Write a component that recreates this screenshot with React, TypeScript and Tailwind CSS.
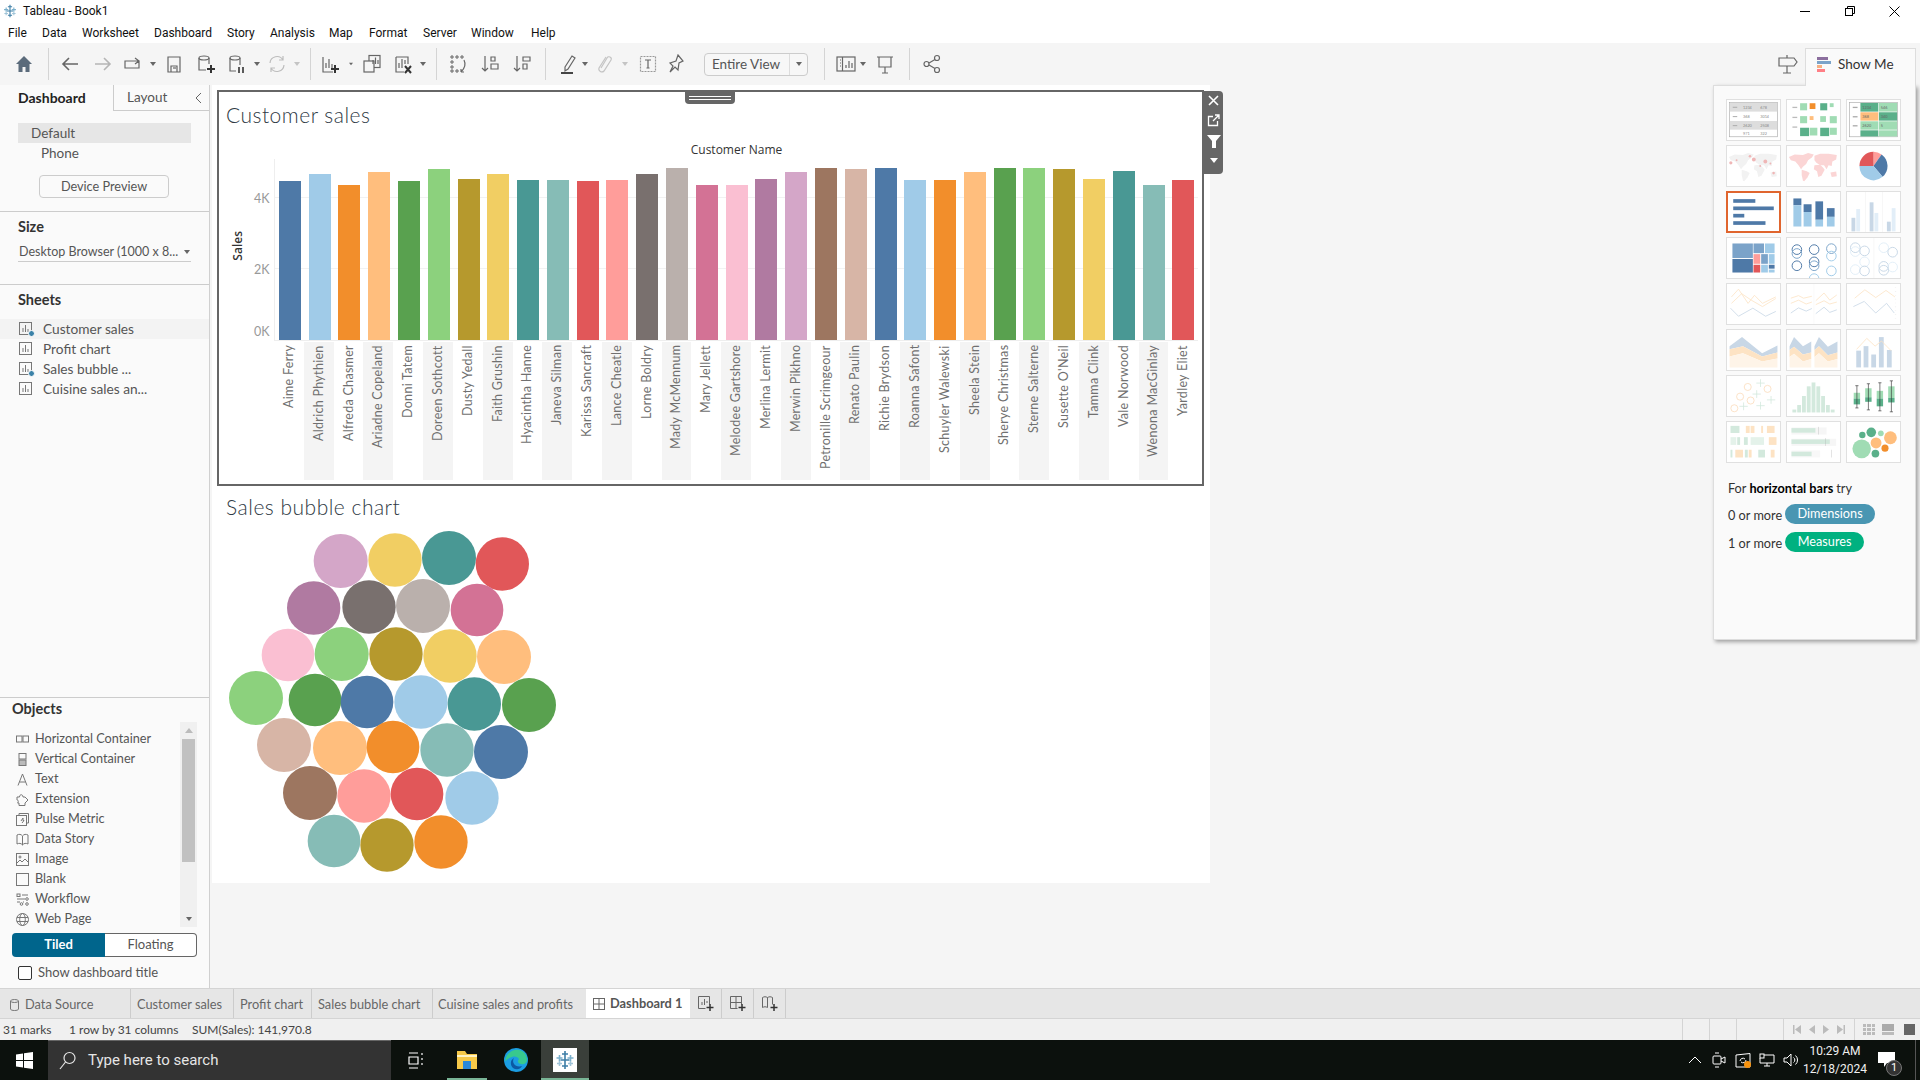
import type { ReactNode } from 'react';

const PALETTE = [
  '#4e79a7', '#a0cbe8', '#f28e2b', '#ffbe7d', '#59a14f', '#8cd17d', '#b6992d', '#f1ce63', '#499894', '#86bcb6',
  '#e15759', '#ff9d9a', '#79706e', '#bab0ac', '#d37295', '#fabfd2', '#b07aa1', '#d4a6c8', '#9d7660', '#d7b5a6',
];

const CUSTOMERS: [string, number][] = [
  ['Aime Ferry', 159], ['Aldrich Phythien', 166], ['Alfreda Chasmer', 155], ['Ariadne Copeland', 168],
  ['Donni Tatem', 159], ['Doreen Sothcott', 171], ['Dusty Yedall', 161], ['Faith Grushin', 166],
  ['Hyacintha Hanne', 160], ['Janeva Silman', 160], ['Karissa Sancraft', 159], ['Lance Cheatle', 160],
  ['Lorne Boldry', 166], ['Mady McMennum', 172], ['Mary Jellett', 155], ['Melodee Gartshore', 155],
  ['Merlina Lermit', 161], ['Merwin Pikhno', 168], ['Petronille Scrimgeour', 172], ['Renato Paulin', 171],
  ['Richie Brydson', 172], ['Roanna Safont', 160], ['Schuyler Walewski', 160], ['Sheela Stein', 168],
  ['Sherye Christmas', 172], ['Sterne Salterne', 172], ['Susette O\'Neil', 171], ['Tamma Clink', 161],
  ['Vale Norwood', 169], ['Wenona MacGinlay', 155], ['Yardley Eliet', 160],
];

const BUBBLES: [number, number, number, string][] = [
  [362, 213, 81, '#d4a6c8'], [525, 210, 80, '#f1ce63'], [687, 204, 81, '#499894'], [847, 222, 80, '#e15759'],
  [281, 354, 80, '#b07aa1'], [447, 351, 80, '#79706e'], [609, 348, 81, '#bab0ac'], [771, 360, 79, '#d37295'],
  [204, 495, 79, '#fabfd2'], [365, 492, 81, '#8cd17d'], [528, 492, 80, '#b6992d'], [690, 498, 80, '#f1ce63'], [852, 501, 81, '#ffbe7d'],
  [108, 624, 81, '#8cd17d'], [285, 630, 79, '#59a14f'], [441, 636, 79, '#4e79a7'], [603, 636, 80, '#a0cbe8'], [763, 642, 80, '#499894'], [927, 645, 81, '#59a14f'],
  [192, 765, 81, '#d7b5a6'], [360, 774, 81, '#ffbe7d'], [519, 771, 79, '#f28e2b'], [681, 780, 80, '#86bcb6'], [843, 786, 81, '#4e79a7'],
  [270, 909, 81, '#9d7660'], [432, 918, 80, '#ff9d9a'], [591, 912, 79, '#e15759'], [756, 924, 80, '#a0cbe8'],
  [342, 1053, 79, '#86bcb6'], [501, 1065, 80, '#b6992d'], [663, 1056, 80, '#f28e2b'],
];

const MENU: [string, string][] = [
  ['File', 'w-[34px]'], ['Data', 'w-[40px]'], ['Worksheet', 'w-[72px]'], ['Dashboard', 'w-[73px]'], ['Story', 'w-[43px]'],
  ['Analysis', 'w-[59px]'], ['Map', 'w-[40px]'], ['Format', 'w-[54px]'], ['Server', 'w-[48px]'], ['Window', 'w-[60px]'], ['Help', 'w-[40px]'],
];

const SANS = "font-['Lato',sans-serif]";

function Slot({ w, children }: { w: string; children?: ReactNode }) {
  return <div className={`${w} h-full flex items-center justify-center shrink-0`}>{children}</div>;
}

function Divider() {
  return <div className="w-px h-[32px] bg-[#d4d4d4] shrink-0" />;
}

function Caret({ light }: { light?: boolean }) {
  return (
    <svg width="6" height="4" viewBox="0 0 6 4">
      <path d="M0 0h6L3 4z" fill={light ? '#c4c4c4' : '#666'} />
    </svg>
  );
}

function Ico({ children, size = 20, color = '#666' }: { children: ReactNode; size?: number; color?: string }) {
  return (
    <svg width={size} height={size} viewBox="0 0 20 20" fill="none" stroke={color} strokeWidth="1.2">
      {children}
    </svg>
  );
}

function TableauMark({ size = 14 }: { size?: number }) {
  return (
    <svg width={size} height={size} viewBox="0 0 20 20" stroke="#3d7ea6" strokeWidth="1.6" fill="none">
      <path d="M10 1v18M5.5 10h9M7 4h6M7 16h6" />
      <path d="M4.5 5v6M1.5 8h6M15.5 5v6M12.5 8h6" stroke="#7bb0cc" />
      <path d="M4.5 11v5M2 13.5h5M15.5 11v5M13 13.5h5" stroke="#a0c4d8" />
    </svg>
  );
}

function SheetIcon({ checked }: { checked?: boolean }) {
  return (
    <div className="relative w-[14px] h-[14px]">
      <svg width="13" height="13" viewBox="0 0 13 13" fill="none">
        <rect x="0.5" y="0.5" width="12" height="12" stroke="#777" />
        <path d="M4 10V6M6.5 10V3M9 10V7" stroke="#777" />
      </svg>
      {checked && <div className="absolute left-[9px] top-[8px] w-[7px] h-[7px] rounded-full bg-[#3b82a8] border border-white" />}
    </div>
  );
}

function ObjectIcon({ name }: { name: string }) {
  const s = { stroke: '#777', fill: 'none' };
  if (name === 'h') return <svg width="13" height="13" viewBox="0 0 13 13" {...s}><rect x="0.5" y="3" width="5.5" height="6" /><rect x="7" y="3" width="5.5" height="6" /></svg>;
  if (name === 'v') return <svg width="13" height="13" viewBox="0 0 13 13" {...s}><rect x="3" y="0.5" width="7" height="5.5" /><rect x="3" y="7" width="7" height="5.5" fill="#bbb" /></svg>;
  if (name === 't') return <svg width="13" height="13" viewBox="0 0 13 13" {...s}><path d="M2 12.5 6.5 1 11 12.5M3.5 9h6" /></svg>;
  if (name === 'e') return <svg width="13" height="13" viewBox="0 0 13 13" {...s}><path d="M1 4h2.500c0-3 3.500-3 3.500 0H9l3 3-3 3v2.500H3V10H1.500c1-1 1-2 0-3H1z" /></svg>;
  if (name === 'p') return <svg width="13" height="13" viewBox="0 0 13 13" {...s}><rect x="0.5" y="2.5" width="10" height="10" /><path d="M3 2V0.5h9.5V10H11M5 8l2-3v2.5h1L6 10" /></svg>;
  if (name === 'd') return <svg width="13" height="13" viewBox="0 0 13 13" {...s}><path d="M1 2c2-1 4-1 5.5 1C8 1 10 1 12 2v9c-2-1-4-1-5.5 1C5 10 3 10 1 11zM6.5 3v9" /></svg>;
  if (name === 'i') return <svg width="13" height="13" viewBox="0 0 13 13" {...s}><rect x="0.5" y="0.5" width="12" height="12" /><circle cx="4" cy="4" r="1" /><path d="m1 10 3-3 2 2 3-3 3 3" /></svg>;
  if (name === 'b') return <svg width="13" height="13" viewBox="0 0 13 13" {...s}><rect x="0.5" y="0.5" width="12" height="12" /></svg>;
  if (name === 'w') return <svg width="13" height="13" viewBox="0 0 13 13" {...s}><rect x="1" y="1" width="3" height="2.5" /><path d="M6 2h6M1 6h8M1 9h3M7 9h1" /><circle cx="11" cy="6" r="1.3" /><circle cx="5.5" cy="11" r="1.3" /><circle cx="11" cy="11" r="1.3" /></svg>;
  return <svg width="13" height="13" viewBox="0 0 13 13" {...s}><circle cx="6.5" cy="6.5" r="6" /><ellipse cx="6.5" cy="6.5" rx="2.8" ry="6" /><path d="M1 4.5h11M1 8.5h11" /></svg>;
}

function Thumb({ children, selected }: { children?: ReactNode; selected?: boolean }) {
  return (
    <div className={`w-[55px] h-[42px] bg-white overflow-hidden ${selected ? 'border-2 border-[#e0652e]' : 'border border-[#e0e0e0]'}`}>
      <svg className="block w-full h-full" viewBox="0 0 166 124" preserveAspectRatio="none">
        {children}
      </svg>
    </div>
  );
}

function Bars({ rects }: { rects: [number, number, number, number, string][] }) {
  return (
    <>
      {rects.map(([x, y, w, h, c], i) => (
        <rect key={i} x={x} y={y} width={w} height={h} fill={c} />
      ))}
    </>
  );
}

function WorldMap({ fill }: { fill: string }) {
  return (
    <g fill={fill}>
      <polygon points="6,34 24,26 50,28 66,22 84,26 78,36 66,44 60,56 50,64 44,72 36,60 26,48 12,44" />
      <polygon points="46,74 62,78 71,84 64,98 54,109 50,108 46,90" />
      <polygon points="86,30 104,24 130,24 156,28 154,42 142,48 140,62 130,60 124,72 116,60 104,60 92,52 86,44" />
      <polygon points="86,60 104,58 114,68 118,74 108,92 98,96 94,78 84,72" />
      <polygon points="136,82 154,79 156,94 140,96" />
    </g>
  );
}

function Rings({ items }: { items: [number, number, string][] }) {
  return (
    <g fill="none" strokeWidth="3">
      {items.map(([x, y, c], i) => (
        <circle key={i} cx={x} cy={y} r="15" stroke={c} />
      ))}
    </g>
  );
}

function Poly({ pts, c, w = 2.5 }: { pts: string; c: string; w?: number }) {
  return <polyline points={pts} fill="none" stroke={c} strokeWidth={w} />;
}

const LO = '#fde3c4';
const LB = '#c8d7e6';
const G1 = '#a0dcb4';
const G2 = '#5ab08a';
const GF = '#d3e9dd';

function ShowMeGrid() {
  return (
    <div className="grid grid-cols-[55px_55px_55px] gap-x-[5px] gap-y-[4px]">
      <Thumb>
        <rect x="8" y="8" width="150" height="106" fill="#fff" stroke="#aaa" strokeWidth="2" />
        <Bars rects={[[9, 9, 148, 27, '#ddd'], [9, 65, 148, 27, '#ddd'], [18, 21, 14, 3, '#aaa'], [18, 50, 14, 3, '#aaa'], [18, 78, 14, 3, '#aaa']]} />
        <g fill="#888" fontSize="12" fontFamily="Lato">
          <text x="50" y="27">1234</text><text x="104" y="27">678</text>
          <text x="50" y="55">368</text><text x="104" y="55">3014</text>
          <text x="50" y="83">2620</text><text x="104" y="83">2508</text>
          <text x="50" y="108">971</text><text x="104" y="108">322</text>
        </g>
      </Thumb>
      <Thumb>
        <Bars rects={[[17, 21, 15, 4, '#bbb'], [17, 52, 15, 4, '#bbb'], [17, 82, 15, 4, '#bbb'],
          [41, 10, 22, 22, G1], [71, 10, 18, 18, '#f28e2b'], [104, 10, 22, 22, G2], [134, 10, 12, 12, G1],
          [41, 50, 22, 22, G1], [71, 50, 12, 12, '#ffbe7d'], [104, 50, 18, 18, G1], [134, 50, 22, 22, G1],
          [41, 86, 28, 26, G2], [71, 86, 24, 24, G1], [104, 86, 28, 26, G2], [134, 86, 22, 22, G1]]} />
      </Thumb>
      <Thumb>
        <rect x="8" y="8" width="150" height="106" fill="#fff" stroke="#aaa" strokeWidth="2" />
        <Bars rects={[[18, 21, 15, 4, '#aaa'], [18, 50, 15, 4, '#aaa'], [18, 78, 15, 4, '#aaa'],
          [42, 9, 56, 27, G2], [100, 9, 57, 27, G1], [42, 38, 56, 26, '#ffbe7d'], [100, 38, 57, 26, G2],
          [42, 66, 56, 26, G1], [100, 66, 57, 26, G1], [42, 94, 56, 19, G2], [100, 94, 57, 19, G1]]} />
        <g fill="#666" fontSize="12" fontFamily="Lato">
          <text x="48" y="27">1234</text><text x="106" y="27">546</text>
          <text x="48" y="55">368</text><text x="106" y="55">340</text>
          <text x="48" y="83">2620</text><text x="106" y="83">5</text>
        </g>
      </Thumb>
      <Thumb>
        <WorldMap fill="#f2f2f2" />
        <g fill="#efb6b6">
          <circle cx="12" cy="52" r="5" /><circle cx="30" cy="44" r="3" /><circle cx="72" cy="32" r="4" /><circle cx="84" cy="42" r="6" />
          <circle cx="120" cy="48" r="6" /><circle cx="136" cy="54" r="3" /><circle cx="104" cy="62" r="3" /><circle cx="146" cy="84" r="4" />
        </g>
      </Thumb>
      <Thumb>
        <WorldMap fill="#fbd5d5" />
      </Thumb>
      <Thumb>
        <path d="M83 62V18A44 44 0 0 1 108.2 26Z" fill="#ff9d9a" />
        <path d="M83 62 108.2 26A44 44 0 0 1 111.3 95.7Z" fill="#4e79a7" />
        <path d="M83 62 111.3 95.7A44 44 0 0 1 39 62Z" fill="#a0cbe8" />
        <path d="M83 62H39A44 44 0 0 1 83 18Z" fill="#e15759" />
      </Thumb>
      <Thumb selected>
        <Bars rects={[[17, 20, 72, 12, '#4e79a7'], [17, 44, 132, 12, '#4e79a7'], [17, 68, 36, 12, '#4e79a7'], [17, 92, 105, 12, '#4e79a7']]} />
      </Thumb>
      <Thumb>
        <Bars rects={[[20, 20, 25, 21, '#4e79a7'], [20, 41, 25, 66, '#a0cbe8'], [52, 38, 25, 24, '#4e79a7'], [52, 62, 25, 45, '#a0cbe8'],
          [89, 29, 24, 57, '#4e79a7'], [89, 86, 24, 21, '#a0cbe8'], [125, 50, 24, 27, '#4e79a7'], [125, 77, 24, 30, '#a0cbe8']]} />
      </Thumb>
      <Thumb>
        <Bars rects={[[58, 0, 1, 124, '#e4e4e4'], [111, 0, 1, 124, '#e4e4e4'], [14, 80, 12, 42, LB], [29, 53, 12, 69, '#e2eef8'],
          [71, 32, 12, 90, LB], [86, 65, 12, 57, '#e2eef8'], [125, 92, 12, 30, LB], [140, 50, 12, 72, '#e2eef8']]} />
      </Thumb>
      <Thumb>
        <Bars rects={[[17, 17, 64, 45, '#7ba3c9'], [83, 17, 33, 30, '#7ba3c9'], [119, 17, 30, 30, '#a0cbe8'], [17, 65, 64, 42, '#4e79a7'],
          [83, 50, 21, 30, '#ff9d9a'], [107, 50, 21, 30, '#7ba3c9'], [131, 50, 18, 30, '#a0cbe8'], [83, 83, 21, 24, '#e15759'],
          [107, 83, 21, 24, '#a0cbe8'], [131, 83, 18, 12, '#4e79a7'], [131, 98, 18, 9, '#a0cbe8']]} />
      </Thumb>
      <Thumb>
        <Rings items={[[31, 36, '#4e79a7'], [31, 48, '#7ba3c9'], [31, 86, '#4e79a7'], [85, 36, '#4e79a7'], [85, 74, '#4e79a7'], [85, 86, '#7ba3c9'], [139, 33, '#7ba3c9'], [139, 56, '#a0cbe8'], [139, 102, '#a0cbe8'], [85, 126, '#a0cbe8']]} />
      </Thumb>
      <Thumb>
        <rect x="84" y="0" width="1" height="124" fill="#e4e4e4" />
        <Rings items={[[26, 30, LB], [26, 42, '#e2eef8'], [55, 40, LB], [26, 98, '#e2eef8'], [55, 74, '#e2eef8'], [55, 102, LB], [115, 30, '#e2eef8'], [143, 44, LB], [115, 88, LB], [143, 90, '#e2eef8'], [115, 100, LB]]} />
      </Thumb>
      <Thumb>
        <Poly c={LO} pts="14,40 36,16 66,60 86,35 111,60 153,40" />
        <Poly c={LO} pts="14,60 46,30 76,50 111,70 153,45" />
        <Poly c={LB} pts="11,75 36,100 81,75 121,100 153,85" />
      </Thumb>
      <Thumb>
        <rect x="84" y="0" width="1" height="124" fill="#eee" />
        <Poly c={LO} pts="12,44 36,36 52,44 78,38" />
        <Poly c={LO} pts="12,60 36,50 60,62 78,56" />
        <Poly c={LB} pts="12,90 36,74 60,84 78,76" />
        <Poly c={LO} pts="90,52 116,28 134,50 156,34" />
        <Poly c={LO} pts="90,64 116,52 134,62 156,56" />
        <Poly c={LB} pts="90,92 116,72 134,88 156,80" />
      </Thumb>
      <Thumb>
        <Poly c={LO} pts="24,44 56,18 90,42 122,20 150,40" />
        <Poly c={LB} pts="20,70 54,54 90,90 124,60 148,90" />
        <path d="M152 10v100" stroke="#eee" strokeDasharray="2 10" strokeWidth="4" />
      </Thumb>
      <Thumb>
        <polygon points="8,50 47,22 110,72 158,48 158,70 110,82 50,50 8,60" fill={LB} />
        <polygon points="8,60 50,50 110,82 158,70 158,88 110,98 50,72 8,82" fill={LO} />
        <polygon points="8,82 50,72 110,98 158,88 158,116 8,116" fill="#fef4e8" />
      </Thumb>
      <Thumb>
        <polygon points="8,50 22,22 50,50 76,36 76,70 50,76 22,52 8,62" fill={LB} />
        <polygon points="8,62 22,52 50,76 76,70 76,90 50,98 22,74 8,84" fill={LO} />
        <polygon points="8,84 22,74 50,98 76,90 76,116 8,116" fill="#fef4e8" />
        <polygon points="86,50 100,22 128,52 158,36 158,70 128,78 100,50 86,62" fill={LB} />
        <polygon points="86,62 100,50 128,78 158,70 158,90 128,98 100,72 86,84" fill={LO} />
        <polygon points="86,84 100,72 128,98 158,90 158,116 86,116" fill="#fef4e8" />
      </Thumb>
      <Thumb>
        <Bars rects={[[29, 64, 15, 52, LB], [52, 50, 15, 66, LB], [76, 76, 15, 40, LB], [100, 22, 15, 94, LB], [125, 62, 15, 54, LB]]} />
        <Poly c={LO} pts="30,60 62,26 88,50 108,34 138,64" />
      </Thumb>
      <Thumb>
        <g fill="none" stroke="#fbdcbc" strokeWidth="2.5">
          <circle cx="65" cy="34" r="11" /><circle cx="127" cy="40" r="11" /><circle cx="41" cy="64" r="11" /><circle cx="74" cy="76" r="11" /><circle cx="23" cy="100" r="11" />
        </g>
        <path d="M105 10v24M92 22h26M93 44v24M80 56h26M138 62v24M125 74h26M52 82v24M39 94h26M105 80v24M92 92h26" stroke={GF} strokeWidth="2.5" />
      </Thumb>
      <Thumb>
        <Bars rects={[[17, 104, 12, 9, GF], [32, 90, 12, 23, GF], [47, 62, 12, 51, GF], [62, 32, 12, 81, GF], [77, 20, 12, 93, GF], [92, 32, 12, 81, GF], [107, 62, 12, 51, GF], [122, 90, 12, 23, GF], [137, 104, 12, 9, GF]]} />
      </Thumb>
      <Thumb>
        <Bars rects={[[21, 52, 20, 18, G1], [21, 70, 20, 18, G2], [57, 38, 20, 28, G1], [57, 66, 20, 14, G2], [93, 46, 20, 24, G1], [93, 70, 20, 24, G2], [129, 32, 20, 36, G1], [129, 68, 20, 14, G2]]} />
        <path d="M31 30v69M26 30h10M26 99h10M67 24v81M62 24h10M62 105h10M103 21v87M98 21h10M98 108h10M139 15v96M134 15h10M134 111h10" stroke="#333" strokeWidth="2" />
      </Thumb>
      <Thumb>
        <Bars rects={[[11, 12, 28, 22, GF], [59, 12, 12, 22, LO], [74, 12, 12, 22, LO], [107, 12, 6, 22, LO], [125, 12, 24, 22, LO],
          [11, 47, 18, 24, '#e4f2ea'], [32, 47, 9, 24, GF], [53, 47, 12, 24, GF], [74, 47, 42, 24, '#e4f2ea'], [131, 47, 24, 24, LO],
          [11, 86, 6, 24, GF], [26, 86, 24, 24, LO], [56, 86, 9, 24, GF], [68, 86, 9, 24, LO], [98, 86, 21, 24, GF], [137, 86, 12, 24, LO]]} />
      </Thumb>
      <Thumb>
        <Bars rects={[[14, 17, 110, 22, '#f6f6f6'], [14, 19, 75, 14, GF], [14, 52, 140, 22, '#f6f6f6'], [14, 54, 120, 14, GF], [14, 88, 90, 22, '#f8f8f8'], [14, 92, 63, 14, GF],
          [98, 15, 1, 24, '#aaa'], [120, 50, 1, 24, '#aaa'], [138, 86, 1, 24, '#aaa']]} />
      </Thumb>
      <Thumb>
        <circle cx="46" cy="83" r="29" fill={G1} /><circle cx="48" cy="40" r="10" fill={G2} /><circle cx="76" cy="32" r="15" fill={G2} />
        <circle cx="106" cy="35" r="9" fill={G1} /><circle cx="136" cy="49" r="20" fill="#ffbe7d" /><circle cx="91" cy="65" r="17" fill="#ffbe7d" />
        <circle cx="119" cy="81" r="11" fill="#f28e2b" /><circle cx="89" cy="98" r="12" fill={G2} />
      </Thumb>
    </div>
  );
}

function Toolbar() {
  return (
    <div className="h-[42px] bg-[#f5f5f5] flex items-center pl-[12px] pr-[122px] shrink-0">
      <Slot w="w-[24px]">
        <svg width="18" height="18" viewBox="0 0 18 18" fill="#5b6b7b"><path d="M9 1 1 9h2.5v8h4v-5h3v5h4V9H17z" /></svg>
      </Slot>
      <Slot w="w-[12px]" />
      <Divider />
      <Slot w="w-[41px]"><Ico><path d="M18 10H3M9 4l-6 6 6 6" strokeWidth="1.6" /></Ico></Slot>
      <Slot w="w-[26px]"><Ico color="#b5b5b5"><path d="M2 10h15M11 4l6 6-6 6" strokeWidth="1.6" /></Ico></Slot>
      <Slot w="w-[34px]"><Ico><path d="M2 7h14v7H2zM12 4l4 3-4 3" /></Ico></Slot>
      <Slot w="w-[6px]"><Caret /></Slot>
      <Slot w="w-[36px]"><Ico><path d="M4 3h12v15H4zM7 18v-6h6v6" /><path d="M9 14h3" /></Ico></Slot>
      <Slot w="w-[28px]">
        <Ico><ellipse cx="8" cy="4" rx="5" ry="2" /><path d="M3 4v12h7M13 4v6" /><path d="M15 11v8M11 15h8" stroke="#333" strokeWidth="2" /></Ico>
      </Slot>
      <Slot w="w-[34px]">
        <Ico><ellipse cx="8" cy="4" rx="5" ry="2" /><path d="M3 4v13h6M13 4v7" /><path d="M12 13v6M16 13v6" stroke="#333" strokeWidth="1.6" /></Ico>
      </Slot>
      <Slot w="w-[6px]"><Caret /></Slot>
      <Slot w="w-[34px]"><Ico color="#bdbdbd"><path d="M3 9a7 7 0 0 1 13-3M17 11a7 7 0 0 1-13 3M16 2v4h-4M4 18v-4h4" /></Ico></Slot>
      <Slot w="w-[6px]"><Caret light /></Slot>
      <Slot w="w-[10px]" />
      <Divider />
      <Slot w="w-[38px]">
        <Ico><path d="M3 3v15h10M6 14V9M9 14V5M12 14v-4" /><path d="M15 11v8M11 15h8" stroke="#333" strokeWidth="2" /></Ico>
      </Slot>
      <Slot w="w-[4px]"><Caret /></Slot>
      <Slot w="w-[38px]">
        <Ico><rect x="7" y="1.5" width="11" height="12" /><rect x="2" y="7" width="10" height="11" fill="#f5f5f5" /><path d="M11 10V6M13.5 10V3.5M16 10V6" /></Ico>
      </Slot>
      <Slot w="w-[24px]">
        <Ico><path d="M3 3v15h8M6 14V9M9 14V5M12 10V6M3 3h12v7" /><path d="m12 12 6 7M18 12l-6 7" stroke="#333" strokeWidth="2" /></Ico>
      </Slot>
      <Slot w="w-[16px]"><Caret /></Slot>
      <Slot w="w-[5px]" />
      <Divider />
      <Slot w="w-[41px]">
        <Ico><path d="M3 2h2v2H3zM8 2h2v2H8zM13 2h2v2h-2zM3 7h2v2H3zM3 12h2v2H3zM8 16h2v2H8zM3 16h2v2H3z" strokeWidth="1" /><path d="M16 6c2 4 1 8-3 12M13 18v-3M13 18h3" /></Ico>
      </Slot>
      <Slot w="w-[24px]">
        <Ico><path d="M5 2v15M2 14l3 3 3-3" /><path d="M11 3h4v4h-4zM11 10h7v5h-7z" /></Ico>
      </Slot>
      <Slot w="w-[40px]">
        <Ico><path d="M5 2v15M2 14l3 3 3-3" /><path d="M11 3h7v4h-7zM11 10h4v5h-4z" /></Ico>
      </Slot>
      <Slot w="w-[3px]" />
      <Divider />
      <Slot w="w-[10px]" />
      <Slot w="w-[24px]">
        <Ico><path d="m7 13 7-11 3 2-7 11-3 2z" /><path d="M3 19h12" stroke="#444" strokeWidth="2" /></Ico>
      </Slot>
      <Slot w="w-[10px]"><Caret /></Slot>
      <Slot w="w-[30px]"><Ico color="#c4c4c4"><path d="M6 14 12 4a2 2 0 0 1 4 2L9 17a3 3 0 0 1-5-3l7-11" /></Ico></Slot>
      <Slot w="w-[10px]"><Caret light /></Slot>
      <Slot w="w-[36px]">
        <Ico><rect x="2.5" y="2.5" width="15" height="15" strokeDasharray="2 1" stroke="#999" /><path d="M7 6h6M10 6v8M8.5 14h3" /></Ico>
      </Slot>
      <Slot w="w-[22px]"><Ico><path d="m11 1 5 6-4 2-1 7-3-3-5 5 3-6-3-3 6-2z" /></Ico></Slot>
      <Slot w="w-[16px]" />
      <div className="w-[104px] h-[23px] border border-[#ccc] rounded-sm flex shrink-0 bg-[#f7f7f7]">
        <span className={`flex-1 flex items-center pl-[7px] text-[13.5px] text-[#555] ${SANS}`}>Entire View</span>
        <span className="w-[18px] border-l border-[#ddd] flex items-center justify-center"><Caret /></span>
      </div>
      <Slot w="w-[16px]" />
      <Divider />
      <Slot w="w-[11px]" />
      <Slot w="w-[20px]">
        <Ico><rect x="1" y="3" width="18" height="14" /><path d="M6.5 3v14M4 6h1M4 9h1M4 12h1M10 14v-3M13 14V7M16 14v-5" /></Ico>
      </Slot>
      <Slot w="w-[14px]"><Caret /></Slot>
      <Slot w="w-[30px]"><Ico><path d="M2 3h16M4 3v10h12V3M10 13v6M7 19h6" /></Ico></Slot>
      <Slot w="w-[9px]" />
      <Divider />
      <Slot w="w-[44px]">
        <Ico><circle cx="15" cy="4" r="2.5" /><circle cx="4.5" cy="10" r="2.5" /><circle cx="15" cy="16" r="2.5" /><path d="m7 9 6-3.5M7 11l6 3.5" /></Ico>
      </Slot>
      <div className="ml-auto">
        <svg width="20" height="20" viewBox="0 0 20 20" fill="none" stroke="#666" strokeWidth="1.2">
          <path d="M1 4h15l3 4-3 4H1zM9 1v3M9 12v7M5 19h8" />
        </svg>
      </div>
    </div>
  );
}

function LeftPanel() {
  return (
    <aside className={`w-[210px] shrink-0 bg-[#fafafa] border-r border-[#d0d0d0] flex flex-col text-[12.7px] text-[#555] ${SANS}`}>
      <div className="flex h-[26px] shrink-0">
        <div className="w-[114px] pl-[18px] pb-[2px] flex items-center text-[14px] font-bold text-[#222] border-r border-[#ccc]">Dashboard</div>
        <div className="flex-1 pl-[13px] flex items-center justify-between pr-[7px] border-b border-[#ccc] text-[13.5px]">
          <span>Layout</span>
          <svg width="7" height="12" viewBox="0 0 7 12" fill="none" stroke="#666"><path d="M6 1 1 6l5 5" /></svg>
        </div>
      </div>
      <div className="h-[101px] shrink-0 border-b border-[#ccc] pt-[12px] pl-[18px] text-[13.5px]">
        <div className="w-[173px] h-[20px] bg-[#e6e6e6] pl-[13px] pt-[1px] flex items-center">Default</div>
        <div className="h-[20px] pl-[23px] pt-[1px] flex items-center">Phone</div>
        <div className="mt-[12px] ml-[21px] w-[130px] h-[23px] border border-[#ccc] rounded-sm flex items-center justify-center text-[12.7px]">Device Preview</div>
      </div>
      <div className="h-[73px] shrink-0 border-b border-[#ccc] pt-[6px] pl-[18px]">
        <div className="h-[16px] pt-[1px] text-[14.5px] font-bold text-[#333] flex items-center">Size</div>
        <div className="mt-[6px] w-[173px] h-[22px] border-b border-[#ccc] flex items-center justify-between pl-[1px] pr-[1px] pt-[3px] text-[12.5px]">
          <span>Desktop Browser (1000 x 8...</span>
          <Caret />
        </div>
      </div>
      <div className="flex-1 pt-[6px]">
        <div className="h-[16px] pt-[1px] pl-[18px] text-[14.5px] font-bold text-[#333] flex items-center">Sheets</div>
        <div className="mt-[12px] text-[13.7px]">
          {[['Customer sales', true], ['Profit chart', false], ['Sales bubble ...', true], ['Cuisine sales an...', false]].map(([name, on], i) => (
            <div key={String(name)} className={`h-[20px] pl-[19px] flex items-center gap-[10px] ${i === 0 ? 'bg-[#f3f3f3]' : ''}`}>
              <SheetIcon checked={Boolean(on)} />
              <span>{name}</span>
            </div>
          ))}
        </div>
      </div>
      <div className="h-[291px] shrink-0 border-t border-[#ccc] pt-[2px]">
        <div className="h-[16px] pt-[1px] pl-[12px] text-[14.5px] font-bold text-[#333] flex items-center">Objects</div>
        <div className="mt-[6px] h-[205px] flex">
          <div className="w-[180px] pt-[7px]">
            {[['h', 'Horizontal Container'], ['v', 'Vertical Container'], ['t', 'Text'], ['e', 'Extension'], ['p', 'Pulse Metric'], ['d', 'Data Story'], ['i', 'Image'], ['b', 'Blank'], ['w', 'Workflow'], ['g', 'Web Page']].map(([k, label]) => (
              <div key={k} className="h-[20px] pl-[16px] flex items-center gap-[6px]">
                <ObjectIcon name={k} />
                <span>{label}</span>
              </div>
            ))}
          </div>
          <div className="w-[17px] bg-[#f0f0f0] flex flex-col items-center">
            <div className="h-[17px] flex items-center"><svg width="8" height="5" viewBox="0 0 8 5"><path d="M0 5h8L4 0z" fill="#bbb" /></svg></div>
            <div className="w-[13px] h-[123px] bg-[#c1c1c1]" />
            <div className="mt-auto h-[17px] flex items-center"><Caret /></div>
          </div>
        </div>
        <div className="mt-[6px] ml-[12px] w-[185px] h-[24px] flex text-[13px]">
          <div className="w-[93px] bg-[#00658c] text-white font-bold rounded-l-sm flex items-center justify-center">Tiled</div>
          <div className="flex-1 border border-[#666] border-l-0 rounded-r-sm bg-white flex items-center justify-center">Floating</div>
        </div>
        <div className="mt-[9px] ml-[18px] h-[14px] flex items-center gap-[6px] text-[13px]">
          <div className="w-[14px] h-[14px] bg-white border border-[#333] rounded-[2px]" />
          <span>Show dashboard title</span>
        </div>
      </div>
    </aside>
  );
}

function SelectedSheet() {
  return (
    <div className="relative shrink-0 mt-[5px] ml-[5px] w-[987px] h-[396px] border-2 border-[#666]">
      <div className="absolute left-[466px] top-[-1px] w-[50px] h-[13px] bg-[#666] rounded-b-sm flex flex-col items-center justify-center gap-[2px]">
        <div className="w-[42px] h-px bg-white" />
        <div className="w-[42px] h-px bg-white" />
      </div>
      <div className="absolute left-[985px] top-[-1px] w-[19px] h-[83px] bg-[#666] rounded-r-sm flex flex-col items-center">
        <svg className="mt-[3px]" width="13" height="13" viewBox="0 0 13 13" stroke="#fff" strokeWidth="1.6"><path d="m2 2 9 9M11 2l-9 9" /></svg>
        <svg className="mt-[7px]" width="13" height="13" viewBox="0 0 13 13" stroke="#fff" strokeWidth="1.3" fill="none"><path d="M6 2.5H1.5v9h9V7M8 1h4v4M12 1 6 7" /></svg>
        <svg className="mt-[7px]" width="14" height="14" viewBox="0 0 14 14" fill="#fff"><path d="M0 1h14L9 7v7H5V7z" /></svg>
        <svg className="mt-[10px]" width="8" height="5" viewBox="0 0 8 5" fill="#fff"><path d="M0 0h8L4 5z" /></svg>
      </div>
      <div className="mt-[9px] ml-[7px] h-[28px] flex items-center text-[21px] text-[#2f3a45] font-['Lato',sans-serif] font-light tracking-[0.5px]">Customer sales</div>
      <div className="mt-[13px] h-[16px] pl-[55px] w-[980px] flex items-center justify-center text-[12px] font-medium text-[#333] font-['Open_Sans',sans-serif]">Customer Name</div>
      <div className="relative ml-[55px] mt-px w-[924px] h-[182px] flex items-end border-l border-b border-[#eee]">
        <div className="absolute left-0 right-0 top-[38px] h-px bg-[#f2f2f2]" />
        <div className="absolute left-0 right-0 top-[109px] h-px bg-[#f2f2f2]" />
        <span className={`absolute left-[-21px] top-[31px] text-[12.5px] text-[#999] ${SANS}`}>4K</span>
        <span className={`absolute left-[-21px] top-[102px] text-[12.5px] text-[#999] ${SANS}`}>2K</span>
        <span className={`absolute left-[-21px] top-[164px] text-[12.5px] text-[#999] ${SANS}`}>0K</span>
        <span className="absolute left-[-46px] top-[72px] [writing-mode:vertical-rl] rotate-180 text-[12px] font-semibold text-[#333] font-['Open_Sans',sans-serif]">Sales</span>
        {CUSTOMERS.map(([name, h], i) => (
          <div key={name} className="relative flex-1 flex justify-center items-end">
            <div className="w-[22px]" style={{ height: h, backgroundColor: PALETTE[i % 20] }} />
          </div>
        ))}
      </div>
      <div className="ml-[55px] mt-px w-[924px] h-[138px] flex">
        {CUSTOMERS.map(([name], i) => (
          <div key={name} className={`flex-1 flex justify-center pt-[3px] ${i % 2 === 1 ? 'bg-[#f4f4f4]' : ''}`}>
            <span className={`[writing-mode:vertical-rl] rotate-180 text-end whitespace-nowrap text-[12.5px] leading-[14px] text-[#707070] h-[132px] tracking-[0.3px] ${SANS}`}>{name}</span>
          </div>
        ))}
      </div>
    </div>
  );
}

function Canvas() {
  return (
    <div className="flex-1 bg-[#f5f5f5] flex pl-[2px]">
      <div className="w-[998px] h-[798px] bg-white flex flex-col">
        <SelectedSheet />
        <div className="shrink-0 mt-[7px] ml-[14px] h-[28px] flex items-center text-[21px] text-[#2f3a45] font-['Lato',sans-serif] font-light tracking-[0.5px]">Sales bubble chart</div>
        <svg className="shrink-0 ml-[8px] -mt-[31px]" width="360" height="390" viewBox="0 0 1080 1170">
          {BUBBLES.map(([cx, cy, r, c], i) => (
            <circle key={i} cx={cx} cy={cy} r={r} fill={c} />
          ))}
        </svg>
      </div>
      <div className="relative ml-[503px] w-[203px] h-[555px] bg-[#fafafa] border border-[#ddd] shadow-[2px_2px_4px_rgba(0,0,0,0.35)]">
        <div className="absolute left-[91px] top-[-38px] w-[111px] h-[38px] bg-[#fafafa] border border-b-0 border-[#ddd] flex items-center pl-[11px] pb-[6px] gap-[6px]">
          <svg width="15" height="16" viewBox="0 0 15 16">
            <rect x="0" y="0" width="11" height="3" fill="#8c6f9e" />
            <rect x="0" y="4" width="14" height="3" fill="#7ba3c9" />
            <rect x="0" y="8" width="5" height="3" fill="#f5b083" />
            <rect x="0" y="12" width="8" height="3" fill="#ff7f86" />
          </svg>
          <span className={`text-[13.5px] text-[#333] ${SANS}`}>Show Me</span>
        </div>
        <div className="pt-[13px] pl-[12px]">
          <ShowMeGrid />
        </div>
        <div className={`mt-[18px] ml-[14px] text-[12.7px] text-[#333] ${SANS}`}>
          <div className="h-[16px] flex items-center gap-[3px]">
            <span>For</span><span className="font-bold text-black">horizontal bars</span><span>try</span>
          </div>
          <div className="mt-[7px] h-[20px] flex items-center gap-[3px]">
            <span className="pt-[3px]">0 or more</span>
            <span className="w-[90px] h-[20px] rounded-full bg-[#4996b2] text-white flex items-center justify-center">Dimensions</span>
          </div>
          <div className="mt-[8px] h-[20px] flex items-center gap-[3px]">
            <span className="pt-[3px]">1 or more</span>
            <span className="w-[79px] h-[20px] rounded-full bg-[#00b180] text-white flex items-center justify-center">Measures</span>
          </div>
        </div>
      </div>
    </div>
  );
}

function SheetTabs() {
  return (
    <div className={`h-[31px] shrink-0 bg-[#e6e6e6] border-t border-b border-[#d4d4d4] flex text-[12.8px] text-[#666] ${SANS}`}>
      <div className="w-[131px] border-r border-[#ccc] pl-[10px] pt-[2px] flex items-center gap-[6px]">
        <svg width="9" height="12" viewBox="0 0 9 12" fill="none" stroke="#777"><ellipse cx="4.5" cy="2" rx="4" ry="1.5" /><path d="M0.5 2v8c0 2 8 2 8 0V2" /></svg>
        <span>Data Source</span>
      </div>
      <div className="w-[103px] border-r border-[#ccc] pl-[6px] pt-[2px] flex items-center">Customer sales</div>
      <div className="w-[78px] border-r border-[#ccc] pl-[6px] pt-[2px] flex items-center">Profit chart</div>
      <div className="w-[121px] border-r border-[#ccc] pl-[6px] pt-[2px] flex items-center">Sales bubble chart</div>
      <div className="w-[153px] pl-[5px] pt-[2px] flex items-center">Cuisine sales and profits</div>
      <div className="w-[104px] bg-white pl-[7px] pt-[1px] flex items-center gap-[5px] font-bold text-[#555]">
        <svg width="12" height="12" viewBox="0 0 12 12" fill="none" stroke="#666"><rect x="0.5" y="0.5" width="11" height="11" /><path d="M6 0v12M0 6h12" /></svg>
        <span>Dashboard 1</span>
      </div>
      {['s', 'd', 'b'].map((k) => (
        <div key={k} className="w-[32px] border-r border-[#ccc] flex items-center justify-center">
          <svg width="17" height="17" viewBox="0 0 17 17" fill="none" stroke="#666">
            {k === 's' && <path d="M1.5 1.5h11v8M1.5 1.5v12h7M5 10V7M7.5 10V4M10 8V6" />}
            {k === 'd' && <path d="M1.5 1.5h11v8M1.5 1.5v12h7M1.5 7.5h11M7 1.5v12" />}
            {k === 'b' && <path d="M1.5 2.5c2-1 3-1 5 0 2-1 3-1 5 0v7M1.5 2.5v10c2-1 3-1 5 0M6.5 2.5v10" />}
            <path d="M13 9v7M9.5 12.5h7" stroke="#333" strokeWidth="1.5" />
          </svg>
        </div>
      ))}
    </div>
  );
}

function StatusBar() {
  return (
    <div className={`h-[21px] shrink-0 bg-[#f0f0f0] flex items-center text-[12px] text-[#444] ${SANS}`}>
      <span className="ml-[3px] w-[66px]">31 marks</span>
      <span className="w-[123px]">1 row by 31 columns</span>
      <span>SUM(Sales): 141,970.8</span>
      <div className="ml-auto h-full flex">
        <div className="w-[27px] border-l border-[#d4d4d4]" />
        <div className="w-[27px] border-l border-[#d4d4d4]" />
        <div className="w-[47px] border-l border-[#d4d4d4]" />
        <div className="w-[71px] border-l border-[#d4d4d4] flex items-center justify-center gap-[8px]">
          <svg width="8" height="9" viewBox="0 0 8 9" fill="#bbb"><path d="M0 0h1.5v9H0zM8 0v9L2 4.5z" /></svg>
          <svg width="6" height="9" viewBox="0 0 6 9" fill="#bbb"><path d="M6 0v9L0 4.5z" /></svg>
          <svg width="6" height="9" viewBox="0 0 6 9" fill="#bbb"><path d="M0 0v9l6-4.5z" /></svg>
          <svg width="8" height="9" viewBox="0 0 8 9" fill="#bbb"><path d="M8 0H6.5v9H8zM0 0v9l6-4.5z" /></svg>
        </div>
        <div className="w-[66px] border-l border-[#d4d4d4] flex items-center gap-[7px] pl-[8px]">
          <div className="w-[12px] h-[11px] grid grid-cols-3 gap-px">
            {[0, 1, 2, 3, 4, 5, 6, 7, 8].map((n) => <div key={n} className="bg-[#bbb]" />)}
          </div>
          <div className="w-[12px] h-[11px] flex flex-col gap-px"><div className="h-[7px] bg-[#aaa]" /><div className="h-[3px] bg-[#bbb]" /></div>
          <div className="ml-[3px] w-[11px] h-[11px] bg-[#666]" />
        </div>
      </div>
    </div>
  );
}

function Taskbar() {
  return (
    <div className="h-[40px] shrink-0 bg-[#0c110d] flex items-center text-white font-['Roboto',sans-serif]">
      <div className="w-[48px] flex justify-center">
        <svg width="17" height="17" viewBox="0 0 17 17" fill="#fff"><path d="M0 2.5 7 1.5v6.5H0zM8 1.3 17 0v8H8zM0 9h7v6.5l-7-1zM8 9h9v8l-9-1.3z" /></svg>
      </div>
      <div className="w-[343px] h-full bg-[#333] border-t border-[#666] flex items-center pl-[11px] gap-[12px] text-[15px] text-[#e6e6e6]">
        <svg width="17" height="19" viewBox="0 0 17 19" fill="none" stroke="#e6e6e6" strokeWidth="1.2"><circle cx="10.5" cy="7" r="5.5" /><path d="M6.5 11 1 18" /></svg>
        <span>Type here to search</span>
      </div>
      <div className="w-[50px] flex justify-center">
        <svg width="16" height="17" viewBox="0 0 16 17" fill="none" stroke="#fff" strokeWidth="1.2"><path d="M1 1h9M1 16h9M1 5h9v7H1zM14 1v2M14 6v2M14 11v2" /></svg>
      </div>
      <div className="relative w-[40px] h-full flex items-center justify-center ml-[6px]">
        <svg width="22" height="20" viewBox="0 0 22 20"><path d="M1 1h8l2 3h10v15H1z" fill="#f7c948" /><rect x="7" y="11" width="8" height="8" fill="#2b88d8" /><rect x="1" y="5" width="20" height="2" fill="#fff3c4" /></svg>
        <div className="absolute bottom-0 left-0 right-0 h-[2px] bg-[#79b596]" />
      </div>
      <div className="w-[54px] pl-[4px] flex justify-center">
        <svg width="24" height="24" viewBox="0 0 24 24">
          <circle cx="12" cy="12" r="12" fill="#1b9de2" />
          <path d="M1 13C2 5 9 1 15 2c5 1 8 5 8 10 0 3-3 5-6 4-3 0-4-3-2-5-1-2-4-3-7-2-4 1-6 4-7 4z" fill="#38c98e" />
          <path d="M9 20c-3-3-3-8 1-10-3 5 2 10 8 8-2 4-6 4-9 2z" fill="#0c59a4" />
        </svg>
      </div>
      <div className="relative w-[48px] h-full bg-[#3a3f3a] flex items-center justify-center">
        <div className="w-[24px] h-[24px] bg-white flex items-center justify-center"><TableauMark size={20} /></div>
        <div className="absolute bottom-0 left-0 right-0 h-[2px] bg-[#79b596]" />
      </div>
      <div className="ml-auto flex items-center h-full">
        <div className="w-[24px] flex justify-center"><svg width="14" height="8" viewBox="0 0 14 8" fill="none" stroke="#fff"><path d="m1 7 6-6 6 6" /></svg></div>
        <div className="w-[24px] flex justify-center"><svg width="14" height="16" viewBox="0 0 14 16" fill="none" stroke="#fff"><rect x="1" y="4" width="8" height="8" rx="1" /><path d="m9 7 4-2v6l-4-2M3 1h4M3 15h4" /></svg></div>
        <div className="relative w-[24px] flex justify-center">
          <svg width="16" height="15" viewBox="0 0 16 15" fill="none" stroke="#fff"><path d="M1 2 15 0.5V14H1zM5 8a3 3 0 0 1 5-2M11 7a3 3 0 0 1-5 2" /></svg>
          <div className="absolute left-[13px] top-[8px] w-[7px] h-[7px] rounded-full bg-[#f7930e]" />
        </div>
        <div className="w-[24px] flex justify-center"><svg width="16" height="14" viewBox="0 0 16 14" fill="none" stroke="#fff"><path d="M5 2h10v8H1V5M8 10v3M5 13h6" /><rect x="1" y="1" width="4" height="4" /></svg></div>
        <div className="w-[24px] flex justify-center"><svg width="16" height="14" viewBox="0 0 16 14" fill="none" stroke="#fff"><path d="M1 5h3l4-4v12L4 9H1zM10.5 4.5a3 3 0 0 1 0 5M12.5 2.5a6 6 0 0 1 0 9" /></svg></div>
        <div className="w-[64px] flex flex-col items-center text-[12px] leading-[18px] text-[#f0f0f0]">
          <span>10:29 AM</span>
          <span>12/18/2024</span>
        </div>
        <div className="relative w-[48px] h-full">
          <svg className="absolute left-[11px] top-[12px]" width="17" height="15" viewBox="0 0 17 15" fill="#fff"><path d="M0 0h17v11H9l-3 4v-4H0z" /></svg>
          <div className="absolute left-[19px] top-[20px] w-[16px] h-[16px] rounded-full bg-[#333] border border-[#777] text-[11px] flex items-center justify-center">1</div>
        </div>
        <div className="w-px h-full bg-[#555]" />
        <div className="w-[4px]" />
      </div>
    </div>
  );
}

export default function App() {
  return (
    <div className="w-[1920px] h-[1080px] bg-white flex flex-col overflow-hidden">
      <div className="h-[22px] flex items-center pl-[3px] gap-[6px] shrink-0 font-['Roboto',sans-serif] text-[12px] text-[#111]">
        <TableauMark />
        <span>Tableau - Book1</span>
        <div className="ml-auto flex items-center h-full pr-[3px]">
          <div className="w-[45px] flex justify-center"><div className="w-[10px] h-px bg-black" /></div>
          <div className="w-[45px] flex justify-center">
            <svg width="10" height="10" viewBox="0 0 10 10" fill="none" stroke="#000"><rect x="0.5" y="2.5" width="7" height="7" /><path d="M2.5 2.5v-2h7v7h-2" /></svg>
          </div>
          <div className="w-[45px] flex justify-center">
            <svg width="11" height="11" viewBox="0 0 11 11" stroke="#000"><path d="m0.5 0.5 10 10M10.5 0.5l-10 10" /></svg>
          </div>
        </div>
      </div>
      <div className="h-[21px] flex items-center pl-[8px] shrink-0 font-['Roboto',sans-serif] text-[12px] text-[#111]">
        {MENU.map(([label, w]) => (
          <span key={label} className={w}>{label}</span>
        ))}
      </div>
      <Toolbar />
      <div className="h-[903px] flex shrink-0 relative">
        <LeftPanel />
        <Canvas />
      </div>
      <SheetTabs />
      <StatusBar />
      <Taskbar />
    </div>
  );
}
